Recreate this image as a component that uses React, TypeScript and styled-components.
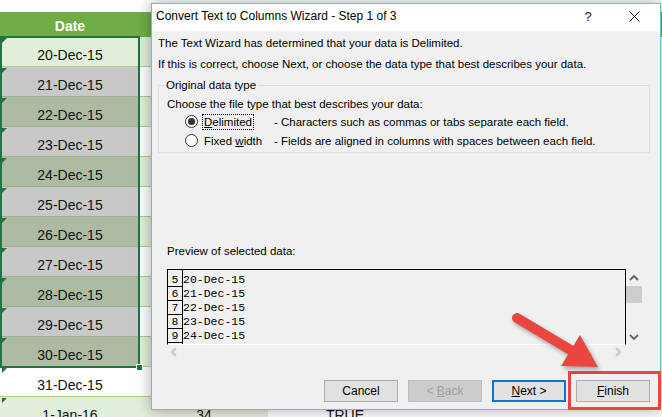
import React from "react";
import styled, { createGlobalStyle } from "styled-components";

const GlobalStyle = createGlobalStyle`
  html, body {
    margin: 0;
    padding: 0;
    background: #ffffff;
  }
`;

const Page = styled.div`
  position: relative;
  width: 662px;
  height: 417px;
  overflow: hidden;
  background: #ffffff;
`;

/* ---------- spreadsheet behind the dialog ---------- */

const Sheet = styled.div`
  display: grid;
  grid-template-columns: 140px 128px 154px 1fr;
  grid-template-rows: 25px;
  grid-auto-rows: 30px;
  padding-top: 12px;
  font-family: "Liberation Sans", Arial, sans-serif;
`;

const HeadCell = styled.div`
  background: #70ad47;
  color: #ffffff;
  font-weight: bold;
  font-size: 14px;
  display: flex;
  align-items: center;
  justify-content: center;
  padding-top: 2px;
  box-sizing: border-box;
`;

const Cell = styled.div<{ $bg: string; $mark?: boolean; $line?: string }>`
  position: relative;
  box-sizing: border-box;
  background: ${({ $bg }) => $bg};
  border-bottom: 1px solid ${({ $line }) => $line || "#a9d08e"};
  display: flex;
  align-items: center;
  justify-content: center;
  padding-top: 6px;
  font-size: 14px;
  color: #111;

  ${({ $mark }) =>
    $mark &&
    `
    &::before {
      content: "";
      position: absolute;
      left: 2px;
      top: 1px;
      border-top: 5px solid #217346;
      border-right: 5px solid transparent;
    }
  `}
`;

const Selection = styled.div`
  position: absolute;
  left: 0;
  top: 36px;
  width: 140px;
  height: 332px;
  box-sizing: border-box;
  border: 2px solid #217346;
  pointer-events: none;
`;

const FillHandle = styled.div`
  position: absolute;
  right: -5px;
  bottom: -5px;
  width: 5px;
  height: 5px;
  background: #217346;
  border: 1px solid #ffffff;
`;

/* ---------- dialog ---------- */

const Dialog = styled.section`
  position: absolute;
  left: 151px;
  top: 3px;
  width: 510px;
  height: 407px;
  box-sizing: border-box;
  border: 1px solid #62c3c9;
  background: #f0f0f0;
  box-shadow: 0 0 14px rgba(0, 0, 0, 0.35);
  display: flex;
  flex-direction: column;
  font-family: "Liberation Sans", Arial, sans-serif;
  font-size: 11.5px;
  color: #000;
`;

const TitleBar = styled.header`
  height: 27px;
  flex-shrink: 0;
  background: #ffffff;
  display: flex;
  align-items: flex-start;
  padding-left: 4px;
`;

const TitleText = styled.div`
  flex: 1;
  line-height: 16px;
  padding-top: 4px;
  font-size: 12px;
  color: #000;
`;

const TitleButton = styled.div<{ $w: number }>`
  width: ${({ $w }) => $w}px;
  height: 24px;
  display: flex;
  align-items: center;
  justify-content: center;
  font-size: 13px;
  color: #111;
`;

const Body = styled.div`
  flex: 1;
  display: flex;
  flex-direction: column;
  padding: 0 10px 0 6px;
`;

const Line = styled.div<{ $top: number; $indent?: number }>`
  line-height: 16px;
  margin-top: ${({ $top }) => $top}px;
  margin-left: ${({ $indent }) => $indent || 0}px;
  white-space: nowrap;
`;

const Group = styled.fieldset`
  margin: 5px 0 0 0;
  padding: 0 0 2px 8px;
  border: 1px solid #dcdcdc;
  min-width: 0;
`;

const Legend = styled.legend`
  margin-left: -3px;
  padding: 0 2px;
  line-height: 16px;
`;

const RadioRow = styled.div`
  display: flex;
  align-items: center;
  height: 19px;
  padding-left: 18px;
  white-space: nowrap;
`;

const RadioCircle = styled.span<{ $checked?: boolean }>`
  width: 11px;
  height: 11px;
  border-radius: 50%;
  border: 1px solid #333;
  background: #ffffff;
  display: flex;
  align-items: center;
  justify-content: center;

  &::after {
    content: "";
    width: 7px;
    height: 7px;
    border-radius: 50%;
    background: ${({ $checked }) => ($checked ? "#333" : "transparent")};
  }
`;

const RadioLabel = styled.span<{ $focus?: boolean }>`
  width: 72px;
  margin-left: 4px;
  box-sizing: border-box;

  span {
    display: inline-block;
    padding: 0 1px;
    line-height: 14px;
    border: 1px dotted ${({ $focus }) => ($focus ? "#000" : "transparent")};
  }
`;

const Preview = styled.div`
  display: grid;
  grid-template-columns: 459px 16px;
  grid-template-rows: 76px 14px;
  margin: 10px 0 0 9px;
`;

const PreviewBox = styled.div`
  box-sizing: border-box;
  border: 1px solid #000;
  border-bottom: 1px solid #ffffff;
  display: flex;
  overflow: hidden;
  font-family: "Liberation Mono", "Courier New", monospace;
  font-size: 11.5px;
`;

const NumCol = styled.div`
  width: 14px;
  border-right: 1px solid #000;
  padding-top: 3px;
  flex-shrink: 0;
`;

const NumCell = styled.div`
  height: 13px;
  line-height: 13px;
  border-bottom: 1px solid #000;
  text-align: center;
`;

const DataCol = styled.div`
  padding-top: 3px;
`;

const DataLine = styled.div`
  height: 14px;
  line-height: 13px;
`;

const VScroll = styled.div`
  display: flex;
  flex-direction: column;
  align-items: stretch;
`;

const ScrollArrow = styled.div`
  height: 17px;
  display: flex;
  align-items: center;
  justify-content: center;
`;

const ScrollTrack = styled.div`
  flex: 1;
`;

const Thumb = styled.div`
  height: 17px;
  background: #cdcdcd;
`;

const HScroll = styled.div`
  display: flex;
  justify-content: space-between;
  align-items: center;
  padding: 0 4px 0 3px;
`;

const Buttons = styled.div`
  display: flex;
  justify-content: flex-end;
  gap: 10px;
  margin-top: 21px;
`;

const Button = styled.div<{ $state?: "default" | "disabled" | "focus" }>`
  width: 74px;
  height: 22px;
  box-sizing: border-box;
  display: flex;
  align-items: center;
  justify-content: center;
  white-space: pre;
  font-size: 12px;
  background: ${({ $state }) => ($state === "disabled" ? "#cccccc" : "#e1e1e1")};
  color: ${({ $state }) => ($state === "disabled" ? "#a0a0a0" : "#000")};
  border: ${({ $state }) =>
    $state === "focus"
      ? "2px solid #0078d7"
      : $state === "disabled"
      ? "1px solid #bfbfbf"
      : "1px solid #adadad"};
`;

const Highlight = styled.div`
  position: absolute;
  left: 568px;
  top: 371px;
  width: 93px;
  height: 39px;
  box-sizing: border-box;
  border: 3px solid #e8463f;
  pointer-events: none;
`;

const ArrowLayer = styled.svg`
  position: absolute;
  left: 0;
  top: 0;
  pointer-events: none;
  filter: drop-shadow(2px 3px 2px rgba(0, 0, 0, 0.3));
`;

const dates = [
  "20-Dec-15",
  "21-Dec-15",
  "22-Dec-15",
  "23-Dec-15",
  "24-Dec-15",
  "25-Dec-15",
  "26-Dec-15",
  "27-Dec-15",
  "28-Dec-15",
  "29-Dec-15",
  "30-Dec-15",
  "31-Dec-15",
  "1-Jan-16",
];

const colA = (i: number) => {
  if (i === 0) return "#e2efda";
  if (i <= 10) return i % 2 === 1 ? "#c8c8c8" : "#aebba3";
  return i % 2 === 1 ? "#ffffff" : "#e2efda";
};

const colB = (i: number) => (i % 2 === 0 ? "#e2efda" : "#ffffff");

const preview = [
  ["5", "20-Dec-15"],
  ["6", "21-Dec-15"],
  ["7", "22-Dec-15"],
  ["8", "23-Dec-15"],
  ["9", "24-Dec-15"],
];

const Chevron = ({ dir, color }: { dir: "up" | "down" | "left" | "right"; color: string }) => {
  const pts = {
    up: "1,6 5,2 9,6",
    down: "1,2 5,6 9,2",
    left: "6,1 2,5 6,9",
    right: "2,1 6,5 2,9",
  }[dir];
  const horiz = dir === "left" || dir === "right";
  return (
    <svg width={horiz ? 8 : 10} height={horiz ? 10 : 8} viewBox={horiz ? "0 0 8 10" : "0 0 10 8"}>
      <polyline points={pts} fill="none" stroke={color} strokeWidth="1.8" />
    </svg>
  );
};

export default function App() {
  return (
    <Page>
      <GlobalStyle />
      <Sheet>
        <HeadCell>Date</HeadCell>
        <HeadCell />
        <HeadCell />
        <HeadCell />
        {dates.map((d, i) => (
          <React.Fragment key={d}>
            <Cell $bg={colA(i)} $mark $line={i >= 1 && i <= 10 ? "#9fb08f" : undefined}>
              {d}
            </Cell>
            <Cell $bg={colB(i)}>{i === 12 ? "34" : ""}</Cell>
            <Cell $bg="#ffffff" $line="#ffffff">
              {i === 12 ? "TRUE" : ""}
            </Cell>
            <Cell $bg="#ffffff" $line="#ffffff" />
          </React.Fragment>
        ))}
      </Sheet>
      <Selection>
        <FillHandle />
      </Selection>

      <Dialog>
        <TitleBar>
          <TitleText>Convert Text to Columns Wizard - Step 1 of 3</TitleText>
          <TitleButton $w={40}>?</TitleButton>
          <TitleButton $w={52}>
            <svg width="11" height="11" viewBox="0 0 11 11">
              <path d="M0.5 0.5 L10.5 10.5 M10.5 0.5 L0.5 10.5" stroke="#111" strokeWidth="1" />
            </svg>
          </TitleButton>
        </TitleBar>
        <Body>
          <Line $top={4}>The Text Wizard has determined that your data is Delimited.</Line>
          <Line $top={5}>
            If this is correct, choose Next, or choose the data type that best describes your data.
          </Line>
          <Group>
            <Legend>Original data type</Legend>
            <Line $top={3}>Choose the file type that best describes your data:</Line>
            <RadioRow>
              <RadioCircle $checked />
              <RadioLabel $focus>
                <span>
                  <u>D</u>elimited
                </span>
              </RadioLabel>
              <span>- Characters such as commas or tabs separate each field.</span>
            </RadioRow>
            <RadioRow>
              <RadioCircle />
              <RadioLabel>
                <span>
                  Fixed <u>w</u>idth
                </span>
              </RadioLabel>
              <span>- Fields are aligned in columns with spaces between each field.</span>
            </RadioRow>
          </Group>
          <Line $top={90} $indent={9}>
            Preview of selected data:
          </Line>
          <Preview>
            <PreviewBox>
              <NumCol>
                {preview.map(([n]) => (
                  <NumCell key={n}>{n}</NumCell>
                ))}
              </NumCol>
              <DataCol>
                {preview.map(([n, d]) => (
                  <DataLine key={n}>{d}</DataLine>
                ))}
              </DataCol>
            </PreviewBox>
            <VScroll>
              <ScrollArrow>
                <Chevron dir="up" color="#606060" />
              </ScrollArrow>
              <Thumb />
              <ScrollTrack />
              <ScrollArrow>
                <Chevron dir="down" color="#606060" />
              </ScrollArrow>
            </VScroll>
            <HScroll>
              <Chevron dir="left" color="#c4c4c4" />
              <Chevron dir="right" color="#c4c4c4" />
            </HScroll>
          </Preview>
          <Buttons>
            <Button>Cancel</Button>
            <Button $state="disabled">
              {"< "}
              <u>B</u>ack
            </Button>
            <Button $state="focus">
              <u>N</u>ext{" >"}
            </Button>
            <Button>
              <u>F</u>inish
            </Button>
          </Buttons>
        </Body>
      </Dialog>

      <Highlight />
      <ArrowLayer width="662" height="417" viewBox="0 0 662 417">
        <line x1="517" y1="318" x2="574" y2="352" stroke="#e8463f" strokeWidth="10" strokeLinecap="round" />
        <polygon points="598,367 580,335 561,366" fill="#e8463f" />
      </ArrowLayer>
    </Page>
  );
}
